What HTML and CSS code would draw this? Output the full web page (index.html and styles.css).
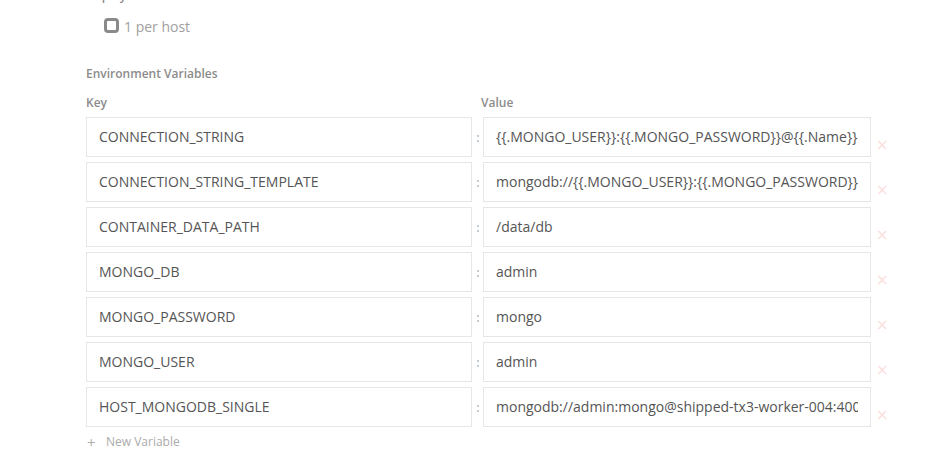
FILE: index.html
```html
<!DOCTYPE html>
<html>
<head>
<meta charset="utf-8">
<link rel="stylesheet" href="styles.css">
</head>
<body>
<div class="page">
  <div class="cut-label">Deployment</div>
  <label class="check-row">
    <span class="checkbox"></span>
    <span class="check-text">1 per host</span>
  </label>

  <div class="section-title">Environment Variables</div>

  <div class="env-grid">
    <div class="col-head">Key</div>
    <div></div>
    <div class="col-head col-value">Value</div>
    <div></div>

    <div class="field"><span class="field-text">CONNECTION_STRING</span></div>
    <div class="sep"></div>
    <div class="field"><span class="field-text">{{.MONGO_USER}}:{{.MONGO_PASSWORD}}@{{.Name}}</span></div>
    <div class="remove">&times;</div>

    <div class="field"><span class="field-text">CONNECTION_STRING_TEMPLATE</span></div>
    <div class="sep"></div>
    <div class="field"><span class="field-text">mongodb://{{.MONGO_USER}}:{{.MONGO_PASSWORD}}@{{.Name}}</span></div>
    <div class="remove">&times;</div>

    <div class="field"><span class="field-text">CONTAINER_DATA_PATH</span></div>
    <div class="sep"></div>
    <div class="field"><span class="field-text">/data/db</span></div>
    <div class="remove">&times;</div>

    <div class="field"><span class="field-text">MONGO_DB</span></div>
    <div class="sep"></div>
    <div class="field"><span class="field-text">admin</span></div>
    <div class="remove">&times;</div>

    <div class="field"><span class="field-text">MONGO_PASSWORD</span></div>
    <div class="sep"></div>
    <div class="field"><span class="field-text">mongo</span></div>
    <div class="remove">&times;</div>

    <div class="field"><span class="field-text">MONGO_USER</span></div>
    <div class="sep"></div>
    <div class="field"><span class="field-text">admin</span></div>
    <div class="remove">&times;</div>

    <div class="field"><span class="field-text">HOST_MONGODB_SINGLE</span></div>
    <div class="sep"></div>
    <div class="field"><span class="field-text">mongodb://admin:mongo@shipped-tx3-worker-004:40017</span></div>
    <div class="remove">&times;</div>
  </div>

  <div class="add-var"><span class="plus">+</span>New Variable</div>
</div>
</body>
</html>
```

FILE: styles.css
```css
html, body {
  margin: 0;
  padding: 0;
  background: #ffffff;
}

body {
  font-family: "Open Sans", "Liberation Sans", sans-serif;
  color: #555555;
  width: 939px;
  height: 472px;
  overflow: hidden;
}

.page {
  padding-left: 86px;
}

.cut-label {
  font-size: 12px;
  line-height: 15px;
  font-weight: 600;
  color: #8c8c8c;
  margin-top: -12px;
}

.check-row {
  display: flex;
  align-items: center;
  gap: 5px;
  margin-left: 18px;
  margin-top: 15px;
  height: 15px;
}

.checkbox {
  box-sizing: border-box;
  width: 15px;
  height: 15px;
  border: 3px solid #8a8a8a;
  border-radius: 4px;
}

.check-text {
  font-size: 14px;
  line-height: 16px;
  color: #a0a0a0;
  padding-top: 3px;
}

.section-title {
  font-size: 12px;
  line-height: 16px;
  font-weight: 600;
  color: #8c8c8c;
  margin-top: 33px;
}

.env-grid {
  display: grid;
  grid-template-columns: 386px 11px 388px 26px;
  row-gap: 5px;
  margin-top: 13px;
}

.col-head {
  font-size: 12px;
  line-height: 16px;
  font-weight: 600;
  color: #8c8c8c;
  margin-bottom: 1px;
}

.col-value {
  margin-left: -2px;
}

.field {
  box-sizing: border-box;
  height: 40px;
  border: 1px solid #e6e6e6;
  padding: 0 12px;
  font-size: 14px;
  line-height: 38px;
  color: #555555;
  background: #fff;
}

.field-text {
  display: block;
  white-space: nowrap;
  overflow: hidden;
}

.sep {
  position: relative;
}

.sep::before,
.sep::after {
  content: "";
  position: absolute;
  left: 5px;
  width: 2px;
  height: 2px;
  background: #c4ccd4;
}

.sep::before { top: 18px; }
.sep::after { top: 23px; }

.remove {
  font-size: 15px;
  line-height: 14px;
  color: #fbdede;
  padding-top: 21px;
  padding-left: 5px;
  font-family: "DejaVu Sans", sans-serif;
}

.add-var {
  font-size: 12px;
  line-height: 16px;
  color: #ababab;
  margin-top: 7px;
  display: flex;
  align-items: center;
}

.plus {
  font-size: 15px;
  width: 19px;
  padding-left: 1px;
  color: #b0b0b0;
}
```
